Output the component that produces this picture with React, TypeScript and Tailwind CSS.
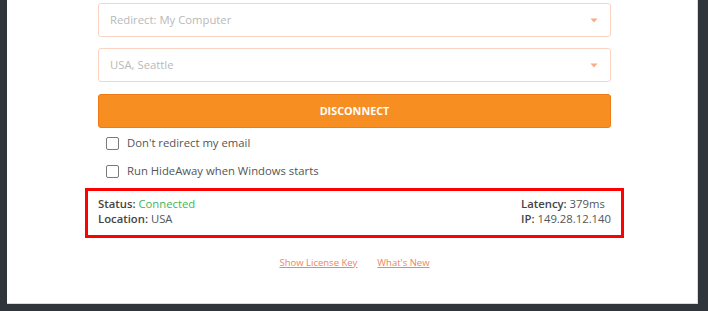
function Caret() {
  return (
    <svg width="8" height="5" viewBox="0 0 8 5" className="shrink-0">
      <path d="M0.5 0.5 H7.5 L4 4.5 Z" fill="#f7ab88" />
    </svg>
  );
}

function SelectBox({ label }: { label: string }) {
  return (
    <div className="flex items-center justify-between h-[34px] rounded-[3px] border border-[#fcd3c1] bg-white pl-[11px] pr-[12px]">
      <span className="text-[11.3px] text-[#b9b9b9]">{label}</span>
      <Caret />
    </div>
  );
}

function Check({ label }: { label: string }) {
  return (
    <label className="flex items-center h-[28px] pl-[8px] gap-[8px]">
      <span className="w-[13px] h-[13px] rounded-[2px] border border-[#7a7a7a] bg-white" />
      <span className="text-[11.3px] text-[#555]">{label}</span>
    </label>
  );
}

function StatusPanel() {
  return (
    <div className="-mx-[13px] mt-[3px] border-[3px] border-[#ff0000] px-[10px] pt-[5px] pb-[9px] flex justify-between text-[11.3px] leading-[15px] text-[#555]">
      <div>
        <p>
          <b className="font-semibold text-[#444]">Status:</b>{" "}
          <span className="text-[#3fb65a]">Connected</span>
        </p>
        <p>
          <b className="font-semibold text-[#444]">Location:</b> USA
        </p>
      </div>
      <div>
        <p>
          <b className="font-semibold text-[#444]">Latency:</b> 379ms
        </p>
        <p>
          <b className="font-semibold text-[#444]">IP:</b> 149.28.12.140
        </p>
      </div>
    </div>
  );
}

export default function App() {
  return (
    <div
      className="h-[311px] w-[708px] bg-[#2f353b] pl-[7px] pr-[10px] overflow-hidden"
      style={{ fontFamily: '"Open Sans", sans-serif' }}
    >
      <div className="h-[304px] bg-white border-r border-b border-[#d9d9d9] pl-[91px] pr-[86px] pt-[3px]">
        <div className="flex flex-col gap-[11px]">
          <SelectBox label="Redirect: My Computer" />
          <SelectBox label="USA, Seattle" />
          <button className="mt-[1px] h-[34px] rounded-[3px] border border-[#ef7a16] bg-[#f68e22] text-white text-[10.8px] font-bold">
            DISCONNECT
          </button>
        </div>
        <div className="mt-[1px]">
          <Check label="Don't redirect my email" />
          <Check label="Run HideAway when Windows starts" />
        </div>
        <StatusPanel />
        <div className="flex justify-center gap-[20px] mt-[18px] text-[9.5px] text-[#f0845a]">
          <a className="underline">Show License Key</a>
          <a className="underline">What's New</a>
        </div>
      </div>
    </div>
  );
}
